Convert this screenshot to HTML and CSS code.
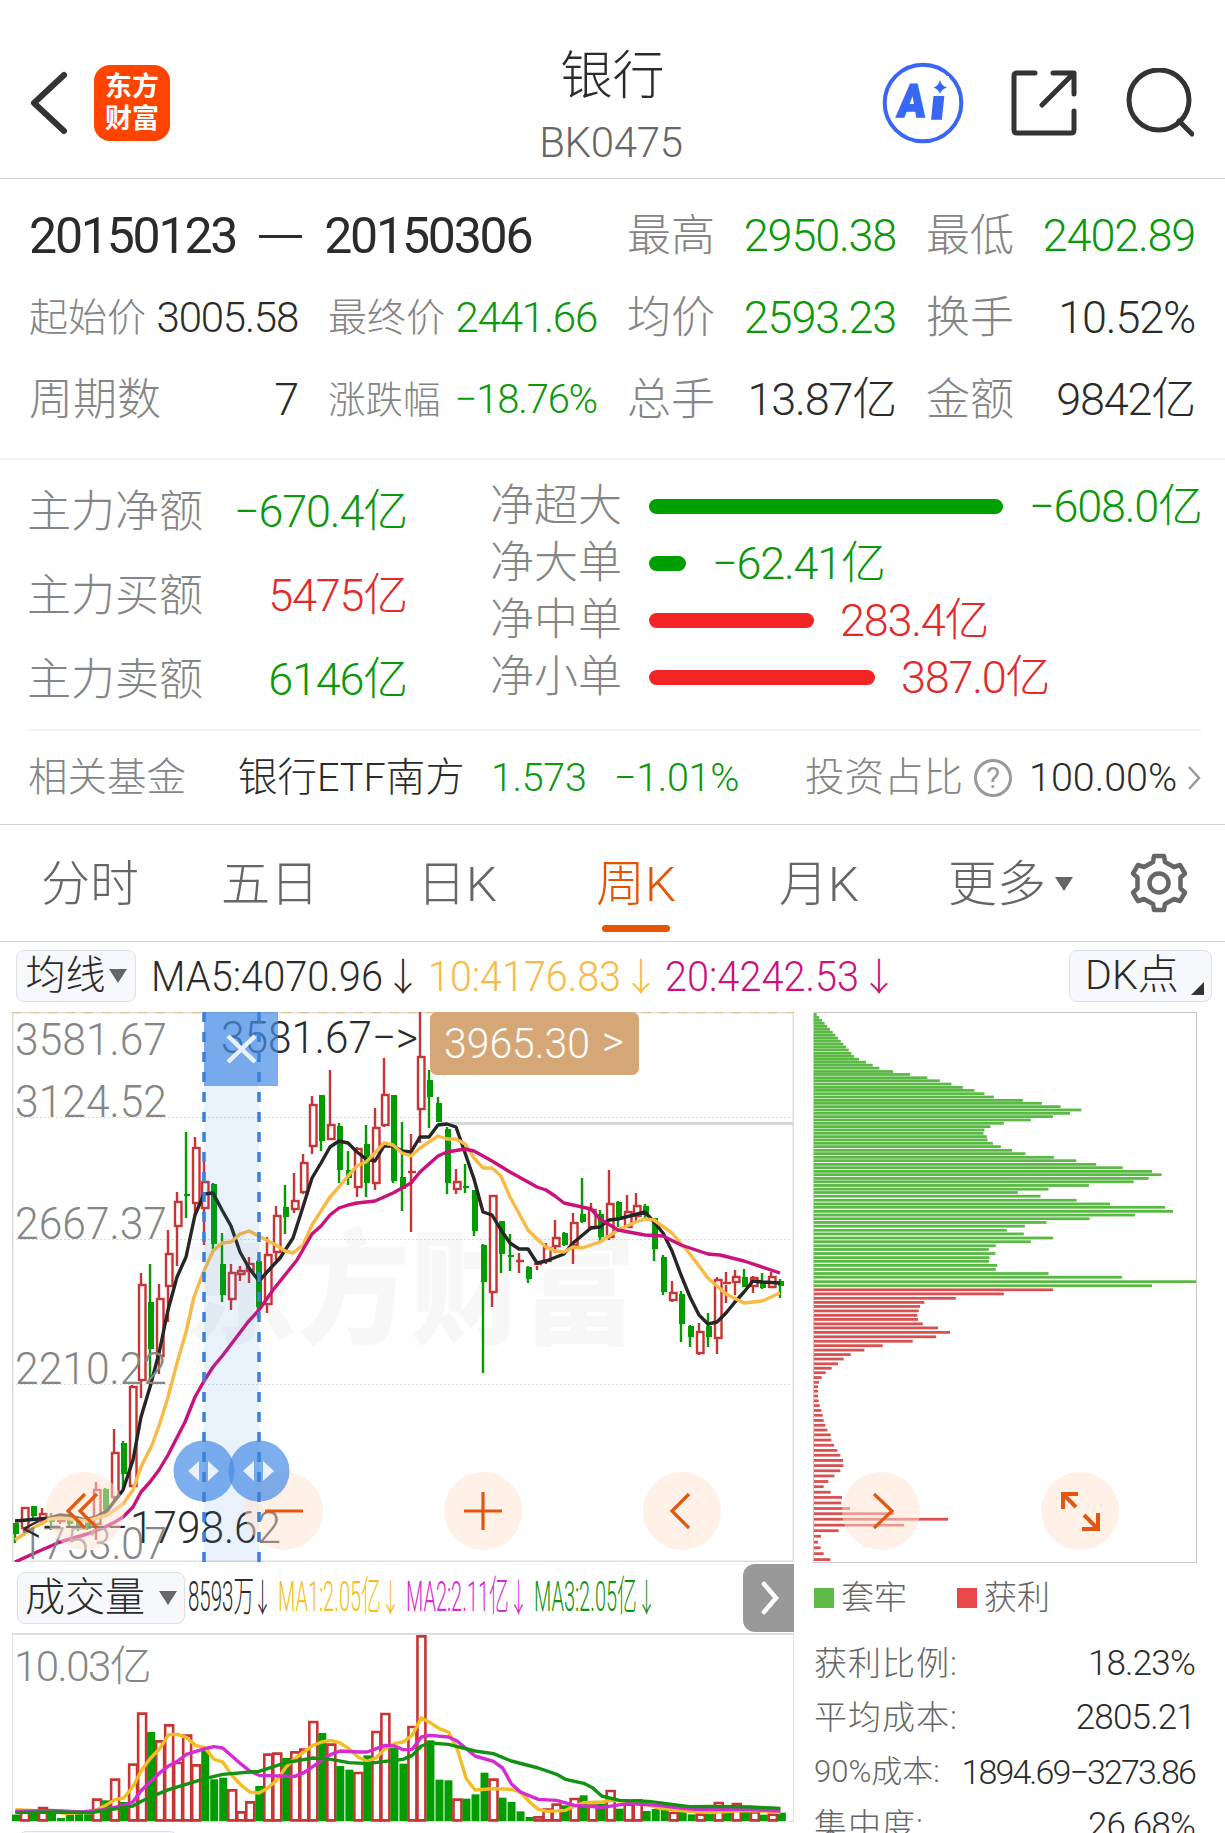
FILE: index.html
```html
<!DOCTYPE html>
<html lang="zh-CN">
<head>
    <meta charset="UTF-8">
    <meta name="viewport" content="width=device-width, initial-scale=1.0">
    <title>银行 BK0475</title>
    <link rel="stylesheet" href="styles.css">
</head>
<body>
    <header class="header">
        <svg class="back" width="40" height="66" viewBox="0 0 40 66"><path d="M35 5 L5 33 L35 61"/></svg>
        <div class="logo"><span>东方</span><span>财富</span></div>
        <div class="title">
            <h1>银行</h1>
            <p>BK0475</p>
        </div>
        <div class="actions">
            <svg width="82" height="82" viewBox="0 0 82 82">
                <circle class="ai-ring" cx="41" cy="41" r="38.3"/>
                <g transform="translate(5 0) skewX(-6)">
                    <text class="ai-text" x="15" y="55" textLength="28" lengthAdjust="spacingAndGlyphs">A</text>
                    <text class="ai-text" x="48" y="57" textLength="15" lengthAdjust="spacingAndGlyphs">i</text>
                </g>
                <rect x="47" y="14" width="20" height="20" fill="#fff"/>
                <path class="ai-star" d="M58 18 Q59.5 24 65 25.500 Q59.500 27 58 32 Q56.500 27 51.500 25.500 Q56.500 24 58 18Z"/>
            </svg>
            <svg class="line-icon" width="66" height="66" viewBox="0 0 66 66"><path d="M24 3 H6 Q3 3 3 6 V60 Q3 63 6 63 H60 Q63 63 63 60 V41 M42 3 H63 V24 M31 35 L62 4"/></svg>
            <svg class="line-icon" width="68" height="70" viewBox="0 0 68 70"><circle cx="33" cy="32" r="30"/><path d="M53 53 L66 66"/></svg>
        </div>
    </header>

    <section class="stats">
        <div class="range">20150123 <i></i> 20150306</div>
        <div class="stat"><label>最高</label><b class="down">2950.38</b></div>
        <div class="stat"><label>最低</label><b class="down">2402.89</b></div>

        <div class="stat mid"><label>起始价</label><b>3005.58</b></div>
        <div class="stat mid"><label>最终价</label><b class="down">2441.66</b></div>
        <div class="stat"><label>均价</label><b class="down">2593.23</b></div>
        <div class="stat"><label>换手</label><b>10.52%</b></div>

        <div class="stat"><label>周期数</label><b>7</b></div>
        <div class="stat small"><label>涨跌幅</label><b class="down">−18.76%</b></div>
        <div class="stat"><label>总手</label><b>13.87亿</b></div>
        <div class="stat"><label>金额</label><b>9842亿</b></div>
    </section>

    <section class="funds">
        <div class="fund-main">
            <div class="stat"><label>主力净额</label><b class="down">−670.4亿</b></div>
            <div class="stat"><label>主力买额</label><b class="up">5475亿</b></div>
            <div class="stat"><label>主力卖额</label><b class="down">6146亿</b></div>
        </div>
        <div class="fund-bars">
            <div class="fund-row down"><label>净超大</label><span class="bar" style="width:354px"></span><b>−608.0亿</b></div>
            <div class="fund-row down"><label>净大单</label><span class="bar" style="width:37px"></span><b>−62.41亿</b></div>
            <div class="fund-row up"><label>净中单</label><span class="bar" style="width:165px"></span><b>283.4亿</b></div>
            <div class="fund-row up"><label>净小单</label><span class="bar" style="width:226px"></span><b>387.0亿</b></div>
        </div>
    </section>

    <section class="related">
        <span class="grey">相关基金</span>
        <span class="etf">银行ETF南方</span>
        <span class="down">1.573</span>
        <span class="down">−1.01%</span>
        <span class="grey ratio">投资占比</span>
        <span class="help">?</span>
        <span class="pct">100.00%</span>
        <svg width="14" height="26" viewBox="0 0 14 26"><path d="M2 2 L12 13 L2 24"/></svg>
    </section>

    <nav class="tabs">
        <a>分时</a>
        <a>五日</a>
        <a>日K</a>
        <a class="active">周K</a>
        <a>月K</a>
        <a class="more">更多<i></i></a>
        <svg class="gear" width="62" height="62" viewBox="-31 -31 62 62">
            <path d="M-6-21 L-5-27 H5 L6-21 L15-16 L21-18 L26-9.500 L21.500-5.500 V5.500 L26 9.500 L21 18 L15 16 L6 21 L5 27 H-5 L-6 21 L-15 16 L-21 18 L-26 9.500 L-21.500 5.500 V-5.500 L-26-9.500 L-21-18 L-15-16Z"/>
            <circle r="9.500"/>
        </svg>
    </nav>

    <div class="ma-bar">
        <button class="chip">均线<i></i></button>
        <svg width="760" height="52" viewBox="145 950 760 52">
            <g class="ma-text">
                <text x="151" y="991" textLength="232" lengthAdjust="spacingAndGlyphs">MA5:4070.96</text>
                <text class="arrow" x="384" y="990">↓</text>
            </g>
            <g class="ma-text yellow">
                <text x="428" y="991" textLength="193" lengthAdjust="spacingAndGlyphs">10:4176.83</text>
                <text class="arrow" x="622" y="990">↓</text>
            </g>
            <g class="ma-text magenta">
                <text x="665" y="991" textLength="194" lengthAdjust="spacingAndGlyphs">20:4242.53</text>
                <text class="arrow" x="860" y="990">↓</text>
            </g>
        </svg>
        <button class="chip dk">DK点</button>
    </div>

    <main class="charts">
        <div class="left">
            <svg class="kline" width="782" height="550" viewBox="12 1012 782 550">
                <text class="watermark" x="184" y="1334" textLength="452" lengthAdjust="spacingAndGlyphs">东方财富</text>
                <path class="grid" d="M12 1117.500 H793 M12 1239.500 H793 M12 1384.500 H793"/>
                <path class="frame" d="M12.500 1012 V1561.500 H793.500 V1012"/>
                <path class="frame" d="M12 1012.500 H794"/>
                <path class="limit" d="M12 1012.500 H794"/>
                <path class="level" d="M438 1123.500 H793"/>
                <g id="candles"></g>
                <polyline class="ma black" points="15,1521 50,1518 60,1515 70,1516 85,1520 96,1517 107,1511 113,1503 123,1490 133,1460 141,1417 150,1387 159,1353 168,1310 177,1277 186,1257 195,1215 204,1194 213,1193 222,1210 231,1226 240,1252 249,1268 259,1281 268,1271 280,1258 293,1238 302,1210 312,1178 321,1163 330,1147 339,1141 348,1143 357,1152 366,1159 375,1161 384,1146 393,1146 402,1151 411,1152 420,1137 429,1137 438,1125 447,1124 456,1127 463,1147 474,1179 483,1212 492,1215 501,1230 510,1243 519,1249 528,1249 537,1263 546,1261 564,1254 573,1243 591,1228 600,1227 609,1220 618,1219 645,1212 654,1222 663,1233 672,1251 681,1275 690,1297 699,1315 708,1324 717,1322 726,1313 735,1302 744,1292 753,1281 762,1282 780,1283"/>
                <polyline class="ma yellow" points="15,1540 33,1528 50,1519 60,1518 70,1519 87,1521 107,1515 123,1504 133,1490 141,1467 152,1445 160,1423 168,1397 177,1363 186,1332 194,1297 203,1273 213,1251 222,1243 231,1242 240,1234 249,1231 259,1236 268,1241 276,1245 285,1251 293,1253 303,1245 312,1225 330,1197 339,1187 348,1176 357,1166 366,1162 375,1153 384,1143 393,1145 402,1153 411,1156 420,1148 438,1136 447,1139 456,1139 465,1144 474,1158 483,1168 492,1168 501,1176 510,1197 528,1230 537,1239 546,1247 555,1251 564,1252 573,1247 582,1248 600,1242 618,1230 636,1222 645,1219 654,1220 672,1233 690,1254 708,1278 726,1294 744,1303 762,1301 780,1293"/>
                <polyline class="ma magenta" points="15,1562 37,1552 60,1542 87,1534 103,1528 115,1522 123,1517 133,1507 141,1492 150,1482 159,1470 168,1455 185,1422 195,1397 204,1381 213,1367 223,1355 248,1322 259,1310 273,1290 297,1260 312,1234 321,1226 330,1215 339,1208 348,1205 357,1203 375,1201 384,1197 393,1193 411,1183 420,1172 438,1156 447,1152 465,1149 474,1151 483,1156 492,1161 510,1172 519,1177 537,1187 546,1190 555,1196 564,1203 591,1209 600,1219 618,1230 645,1235 663,1236 681,1245 708,1254 720,1255 744,1261 771,1270 780,1273"/>
                <g class="axis">
                    <text x="15" y="1055" textLength="152" lengthAdjust="spacingAndGlyphs">3581.67</text>
                    <text x="15" y="1117" textLength="152" lengthAdjust="spacingAndGlyphs">3124.52</text>
                    <text x="15" y="1239" textLength="152" lengthAdjust="spacingAndGlyphs">2667.37</text>
                    <text x="15" y="1384" textLength="152" lengthAdjust="spacingAndGlyphs">2210.22</text>
                    <text x="20" y="1559" textLength="147" lengthAdjust="spacingAndGlyphs">1753.07</text>
                </g>
                <g class="mark">
                    <text x="221" y="1053" textLength="197" lengthAdjust="spacingAndGlyphs">3581.67−&gt;</text>
                    <text x="22" y="1543" textLength="106" lengthAdjust="spacingAndGlyphs">&lt;−−−−</text>
                    <text x="130" y="1543" textLength="151" lengthAdjust="spacingAndGlyphs">1798.62</text>
                </g>
                <rect class="price-tag" x="430" y="1012" width="209" height="63" rx="7"/>
                <text class="price-text" x="444" y="1058" textLength="146" lengthAdjust="spacingAndGlyphs">3965.30</text>
                <text class="price-text" x="602" y="1056" textLength="22" lengthAdjust="spacingAndGlyphs">&gt;</text>
            </svg>

            <div class="vol-bar">
                <button class="chip">成交量<i></i></button>
                <svg width="480" height="52" viewBox="186 1572 480 52">
                    <g class="vol-text">
                        <text x="189" y="1611" textLength="66" lengthAdjust="spacingAndGlyphs">8593万</text>
                        <text class="v1" x="279" y="1611" textLength="103" lengthAdjust="spacingAndGlyphs">MA1:2.05亿</text>
                        <text class="v2" x="407" y="1611" textLength="103" lengthAdjust="spacingAndGlyphs">MA2:2.11亿</text>
                        <text class="v3" x="535" y="1611" textLength="103" lengthAdjust="spacingAndGlyphs">MA3:2.05亿</text>
                        <text class="arrow" x="254" y="1611" textLength="19" lengthAdjust="spacingAndGlyphs">↓</text>
                        <text class="arrow v1" x="382" y="1611" textLength="19" lengthAdjust="spacingAndGlyphs">↓</text>
                        <text class="arrow v2" x="510" y="1611" textLength="19" lengthAdjust="spacingAndGlyphs">↓</text>
                        <text class="arrow v3" x="638" y="1611" textLength="19" lengthAdjust="spacingAndGlyphs">↓</text>
                    </g>
                </svg>
                <button class="next"><svg width="20" height="34" viewBox="0 0 20 34"><path d="M3 3 L15 17 L3 31"/></svg></button>
            </div>

            <div class="volume">
                <span>10.03亿</span>
                <svg width="782" height="187" viewBox="23.500 219 1531 561" preserveAspectRatio="none">
                    <g id="volumes"></g>
                    <polyline class="ma v1" points="30,743 100,748 130,755 180,750 207,730 225,713 242,708 260,675 277,625 295,588 313,560 330,518 348,517 365,527 383,550 401,557 419,592 436,600 454,640 471,668 489,690 507,693 524,678 542,655 560,615 577,590 595,570 613,550 630,540 648,535 666,543 683,560 701,585 719,598 736,588 754,560 772,545 789,540 807,520 825,467 842,482 860,500 878,510 895,560 913,650 930,684 966,680 1001,682 1019,690 1037,720 1054,742 1072,748 1107,745 1125,732 1143,722 1178,720 1195,715 1248,720 1290,738 1340,747 1390,752 1440,747 1480,746 1528,752"/>
                    <polyline class="ma v2" points="30,748 100,745 160,750 207,742 242,730 260,720 277,685 313,632 330,612 348,597 365,577 401,560 419,554 436,558 454,582 471,605 489,627 507,640 577,643 595,632 613,613 630,595 648,577 666,567 701,570 719,570 754,550 772,552 789,563 807,562 825,525 842,520 878,525 895,537 930,582 966,598 984,618 1001,665 1019,690 1054,712 1090,715 1125,730 1178,736 1230,725 1290,730 1340,740 1370,743 1460,742 1528,747"/>
                    <polyline class="ma v3" points="30,752 100,750 180,752 207,745 260,732 277,718 295,705 330,683 401,650 436,637 507,628 560,602 613,588 648,592 683,602 719,605 754,598 789,592 807,580 825,552 842,543 878,547 930,567 966,575 1001,597 1054,618 1090,637 1107,652 1143,664 1160,677 1178,702 1213,715 1270,718 1350,734 1400,733 1470,735 1528,739"/>
                </svg>
            </div>
            <div class="chip peek"></div>
        </div>

        <aside class="right">
            <svg class="chips" width="384" height="551" viewBox="69 33 1151 1489" preserveAspectRatio="none">
                <g id="chips"></g>
            </svg>
            <div class="legend">
                <span class="sq trapped"></span><span>套牢</span>
                <span class="sq profit"></span><span>获利</span>
            </div>
            <dl class="cost">
                <div><dt>获利比例:</dt><dd>18.23%</dd></div>
                <div><dt>平均成本:</dt><dd>2805.21</dd></div>
                <div class="tight"><dt>90%成本:</dt><dd>1894.69−3273.86</dd></div>
                <div><dt>集中度:</dt><dd>26.68%</dd></div>
            </dl>
        </aside>

        <!-- selected range and floating controls -->
        <svg class="overlay" width="1225" height="550" viewBox="0 1012 1225 550">
            <rect class="sel" x="204" y="1012" width="55" height="550"/>
            <g class="pads">
                <circle cx="85" cy="1511" r="39"/>
                <circle cx="284" cy="1511" r="39"/>
                <circle cx="483" cy="1511" r="39"/>
                <circle cx="682" cy="1511" r="39"/>
                <circle cx="881" cy="1511" r="39"/>
                <circle cx="1080" cy="1511" r="39"/>
            </g>
            <path class="pad-icon" d="M85 1494 L68 1511 L85 1528 M97 1494 L80 1511 L97 1528 M265 1511 H303 M464 1511 H502 M483 1492 V1530 M689 1494 L672 1511 L689 1528 M874 1494 L892 1511 L874 1528"/>
            <path class="pad-icon bold" d="M1078 1494 H1063 V1509 M1063 1494 L1076 1507 M1082 1529 H1098 V1513 M1098 1529 L1084 1515"/>
            <rect class="handle" x="204" y="1012" width="74" height="74"/>
            <circle class="handle" cx="204" cy="1471" r="30.500"/>
            <circle class="handle" cx="259" cy="1471" r="30.500"/>
            <path class="cross" d="M228 1036 L255 1062 M255 1036 L228 1062"/>
            <path class="tri" d="M199 1461 V1481 L188 1471Z M208 1461 V1481 L219 1471Z M254 1461 V1481 L243 1471Z M263 1461 V1481 L274 1471Z"/>
            <path class="sel-line" d="M204 1012 V1562 M259 1012 V1562"/>
        </svg>
    </main>

    <script>
        var NS = "http://www.w3.org/2000/svg";

        function add(parent, tag, attrs) {
            var el = document.createElementNS(NS, tag);
            for (var k in attrs) el.setAttribute(k, attrs[k]);
            parent.appendChild(el);
        }

        // [high, body top, body bottom, low, 1 = up]
        var candles = [
            [1523,1523,1534,1543,0],[1507,1507,1529,1536,1],[1506,1506,1516,1518,0],[1508,1513,1522,1525,1],[1513,1516,1522,1530,0],
            [1515,1517,1522,1524,1],[1514,1517,1524,1528,0],[1516,1519,1527,1531,0],[1516,1521,1529,1530,0],[1482,1489,1525,1540,1],
            [1488,1489,1510,1512,0],[1429,1452,1498,1500,1],[1441,1443,1474,1488,0],[1385,1386,1487,1487,1],[1273,1284,1381,1398,1],
            [1264,1302,1349,1383,0],[1284,1298,1357,1374,1],[1230,1253,1287,1322,1],[1192,1201,1227,1266,1],[1132,1194,1196,1218,0],
            [1137,1147,1204,1216,1],[1162,1181,1209,1245,1],[1183,1184,1244,1249,0],[1233,1264,1295,1302,0],[1264,1272,1300,1310,1],
            [1266,1270,1275,1281,1],[1257,1263,1272,1283,1],[1260,1261,1307,1318,0],[1237,1254,1305,1313,1],[1206,1215,1253,1260,1],
            [1185,1207,1217,1234,0],[1173,1200,1210,1213,1],[1154,1162,1193,1194,1],[1096,1104,1147,1154,1],[1095,1095,1141,1151,0],
            [1070,1124,1140,1140,1],[1123,1126,1170,1183,0],[1151,1170,1178,1185,0],[1147,1148,1188,1197,1],[1125,1144,1183,1197,0],
            [1108,1127,1184,1190,1],[1058,1094,1126,1127,1],[1095,1095,1181,1183,0],[1122,1177,1189,1211,0],[1134,1171,1172,1232,1],
            [1012,1056,1110,1143,1],[1070,1080,1097,1128,0],[1097,1103,1122,1122,0],[1127,1129,1183,1194,0],[1169,1181,1190,1194,1],
            [1164,1186,1187,1193,0],[1190,1190,1231,1236,0],[1244,1245,1282,1373,0],[1195,1195,1293,1307,1],[1221,1221,1254,1273,0],
            [1234,1255,1256,1271,0],[1253,1260,1261,1273,1],[1266,1267,1279,1283,0],[1262,1263,1266,1270,1],[1243,1247,1262,1264,1],
            [1220,1237,1247,1253,1],[1232,1233,1245,1246,0],[1213,1222,1246,1264,1],[1178,1214,1222,1223,0],[1203,1209,1228,1228,1],
            [1210,1214,1237,1243,0],[1170,1203,1238,1240,1],[1201,1202,1220,1227,0],[1195,1211,1228,1228,1],[1193,1205,1217,1222,1],
            [1204,1206,1215,1220,0],[1218,1218,1249,1261,0],[1255,1257,1292,1295,0],[1281,1292,1301,1302,1],[1291,1294,1324,1342,0],
            [1325,1326,1337,1347,0],[1323,1331,1354,1355,1],[1313,1326,1337,1347,0],[1277,1279,1339,1354,1],[1272,1282,1285,1303,1],
            [1270,1276,1283,1295,1],[1269,1277,1287,1287,0],[1276,1277,1287,1293,1],[1273,1281,1288,1289,0],[1272,1276,1288,1288,1],
            [1279,1281,1286,1298,0]
        ];

        var kg = document.getElementById("candles");
        candles.forEach(function (c, i) {
            var x = 15 + 9 * i;
            if (!c[4]) {
                add(kg, "path", { "class": "k-down", d: "M" + x + " " + c[0] + "V" + c[3] });
                add(kg, "rect", { "class": "k-down-body", x: x - 2, y: c[1], width: 6, height: Math.max(2, c[2] - c[1]) });
            } else {
                add(kg, "path", { "class": "k-up", d: "M" + x + " " + c[0] + "V" + c[1] + "M" + x + " " + c[2] + "V" + c[3] });
                if (c[2] - c[1] < 4) {
                    add(kg, "path", { "class": "k-up", d: "M" + (x - 3) + " " + (c[1] + 1) + "H" + (x + 5) });
                } else {
                    add(kg, "rect", { "class": "k-up", x: x - 2, y: c[1] + 1, width: 6.5, height: c[2] - c[1] - 2 });
                }
            }
        });

        var volumes = [
            758,745,750,735,755,768,758,745,757,710,715,650,720,605,452,510,535,487,600,518,607,560,652,647,682,748,718,672,575,572,
            588,568,560,477,513,545,612,623,630,580,507,453,558,605,492,220,535,653,655,710,710,697,632,650,707,720,748,765,763,740,
            725,730,708,700,728,725,684,740,725,712,747,741,742,750,748,757,755,745,720,748,723,748,748,758,755,752
        ];
        var volUp = [1,3,9,11,13,14,16,17,18,19,20,24,25,26,28,29,31,32,33,35,38,40,41,44,45,49,53,58,59,60,62,64,66,68,69,73,76,78,80,82,84];

        var vg = document.getElementById("volumes");
        volumes.forEach(function (y, i) {
            var x = 31.5 + 17.64 * i;
            if (volUp.indexOf(i) < 0) {
                add(vg, "rect", { "class": "v-down", x: x - 8, y: y, width: 15.6, height: 777 - y });
            } else {
                add(vg, "rect", { "class": "v-up", x: x - 8, y: y + 3, width: 15.6, height: Math.max(3, 772 - y) });
            }
        });

        // cost distribution rows: [y, right edge]
        var rows = [
            [40,80],[48,88],[56,96],[64,104],[72,112],[80,120],[88,128],[96,136],[104,144],[112,152],[120,160],[128,168],[136,176],[145,184],[153,192],
            [161,207],[169,228],[177,248],[185,268],[194,309],[202,360],[211,412],[219,449],[228,484],[237,518],[245,553],[254,583],[263,611],[272,698],[280,755],
            [289,811],[298,873],[307,839],[316,788],[325,722],[334,641],[343,601],[352,583],[361,580],[370,590],[379,592],[388,608],[397,632],[407,666],[416,706],
            [426,791],[435,858],[445,918],[454,997],[464,1085],[473,1114],[483,1075],[492,1030],[502,896],[512,775],[521,683],[531,751],[542,859],[552,959],[561,1124],
            [572,1148],[582,1034],[592,898],[602,769],[612,704],[623,650],[633,701],[644,789],[654,722],[665,617],[675,596],[686,616],[697,598],[707,597],[718,621],
            [729,617],[740,775],[750,995],[762,1218],[773,1085],
            [784,789],[795,641],[807,497],[818,403],[829,390],[841,386],[853,382],[864,384],[876,398],[887,444],[899,480],[911,438],[923,368],[935,278],[947,223],
            [959,182],[971,161],[984,144],[996,125],[1008,107],[1021,95],[1034,87],[1046,84],[1058,84],[1071,84],[1084,86],[1097,89],[1110,94],[1123,98],[1137,101],
            [1150,106],[1163,112],[1176,122],[1190,124],[1204,132],[1218,142],[1231,151],[1245,159],[1259,160],[1273,151],[1287,133],[1302,115],[1316,101],[1331,122],[1345,156],
            [1360,154],[1375,180],[1389,311],[1404,474],[1420,342],[1435,146],[1450,93],[1466,84],[1481,92],[1497,101],[1513,121]
        ];

        var cg = document.getElementById("chips");
        rows.forEach(function (r) {
            add(cg, "rect", { "class": r[0] < 780 ? "trapped" : "profit", x: 72, y: r[0] - 4, width: r[1] - 72, height: 7.5 });
        });
    </script>
</body>
</html>
```
FILE: styles.css
```css
* {
    box-sizing: border-box;
}

body {
    margin: 0;
    width: 1225px;
    height: 1833px;
    overflow: hidden;
    background: #fff;
    color: #2b2b2b;
    font-family: Roboto, "Noto Sans CJK SC", sans-serif;
    font-weight: 300;
    line-height: 1.2;
}

h1, p, dl, dd, dt {
    margin: 0;
    font-weight: 300;
}

b {
    font-weight: 300;
}

i {
    display: inline-block;
}

svg {
    display: block;
    fill: none;
}

.down {
    color: #0b980b;
}

.up {
    color: #e32a2a;
}

.grey, label {
    color: #858585;
}

/* Header */
.header {
    display: flex;
    align-items: center;
    height: 179px;
    padding: 27px 31px 0 29px;
    border-bottom: 1px solid #d3d3d3;
    position: relative;
}

.back {
    stroke: #333;
    stroke-width: 6;
    stroke-linecap: round;
    stroke-linejoin: round;
}

.logo {
    display: flex;
    flex-direction: column;
    align-items: center;
    justify-content: center;
    width: 76px;
    height: 76px;
    margin-left: 25px;
    border-radius: 16px;
    background: #ff4400;
    color: #fff;
    font-size: 27px;
    font-weight: 700;
    line-height: 32px;
}

.title {
    position: absolute;
    left: 0;
    right: 0;
    top: 40px;
    text-align: center;
}

.title h1 {
    font-size: 52px;
    line-height: 74px;
}

.title p {
    padding-right: 3px;
    color: #666;
    font-size: 42px;
    line-height: 57px;
    letter-spacing: -0.300px;
}

.actions {
    display: flex;
    align-items: center;
    margin-left: auto;
}

.actions svg + svg {
    margin-left: 47px;
}

.actions svg:last-child {
    margin-left: 49px;
}

.ai-ring {
    stroke: #3866f5;
    stroke-width: 4;
}

.ai-text {
    fill: #3866f5;
    stroke: #3866f5;
    stroke-width: 1.500;
    font-size: 46px;
    font-weight: 900;
}

.ai-star {
    fill: #3866f5;
}

.line-icon {
    stroke: #333;
    stroke-width: 5;
    stroke-linecap: round;
    stroke-linejoin: round;
}

/* Period stats */
.stats {
    display: grid;
    grid-template-columns: repeat(4, 268px);
    grid-template-rows: repeat(3, 82px);
    column-gap: 31px;
    height: 281px;
    padding: 16px 30px 0 29px;
    border-bottom: 2px solid #f2f2f2;
}

.range {
    grid-column: span 2;
    display: flex;
    align-items: center;
    font-size: 50px;
    font-weight: 400;
    letter-spacing: -2.200px;
}

.range i {
    width: 43px;
    height: 3px;
    margin: 0 22px 0 23px;
    background: #2b2b2b;
}

.stat {
    display: flex;
    align-items: center;
    justify-content: space-between;
    font-size: 44px;
    white-space: nowrap;
}

.stat b, .fund-row b {
    font-size: 45px;
    letter-spacing: -1.200px;
}

.stats .stat b {
    margin-right: -1px;
}

.stat.mid label {
    font-size: 39px;
}

.stat.mid b {
    font-size: 42px;
}

.stat.small label {
    font-size: 37.500px;
}

.stat.small b {
    font-size: 40px;
}

/* Money flow */
.funds {
    display: flex;
    height: 269px;
    padding: 10px 0 0 27px;
}

.fund-main {
    display: grid;
    grid-template-rows: repeat(3, 84px);
    width: 380px;
}

.fund-bars {
    margin: 8px 0 0 83px;
}

.fund-row {
    display: flex;
    align-items: center;
    height: 57px;
    font-size: 44px;
    white-space: nowrap;
}

.fund-row label {
    width: 159px;
}

.bar {
    height: 15px;
    margin-right: 26px;
    border-radius: 8px;
    background: #009f00;
}

.fund-row.up .bar {
    background: #f32424;
}

/* Related fund */
.related {
    display: grid;
    grid-template-columns: 210px 253px 123px 191px 169px 55px 158px 14px;
    align-items: center;
    height: 95px;
    margin: 0 24px 0 28px;
    border-top: 2px solid #f4f4f4;
    font-size: 39.500px;
    white-space: nowrap;
}

.related .down {
    letter-spacing: -0.300px;
}

.help {
    width: 38px;
    height: 38px;
    border: 3px solid #999;
    border-radius: 50%;
    color: #999;
    font-size: 29px;
    font-weight: 400;
    line-height: 32px;
    text-align: center;
}

.related svg {
    stroke: #999;
    stroke-width: 2.500;
}

/* Tabs */
.tabs {
    display: grid;
    grid-template-columns: 180px 180px 194px 164px 202px 188px 1fr;
    align-items: center;
    height: 118px;
    border-top: 1px solid #d3d3d3;
    border-bottom: 1px solid #d3d3d3;
    color: #666;
    font-size: 49px;
    text-align: center;
}

.tabs a {
    position: relative;
    padding-top: 4px;
    line-height: 112px;
}

.tabs .active {
    color: #e65400;
}

.tabs .active::after {
    content: "";
    position: absolute;
    left: 50%;
    bottom: 9px;
    width: 68px;
    height: 7px;
    margin-left: -34px;
    border-radius: 4px;
    background: #e65400;
}

.tabs i, .chip i {
    border: 9px solid transparent;
    border-top: 14px solid #666;
    border-bottom: 0;
    vertical-align: middle;
}

.tabs .more {
    padding-right: 7px;
}

.tabs i {
    margin: 0 0 8px 9px;
}

.gear {
    margin-left: 20px;
    stroke: #666;
    stroke-width: 4.500;
    stroke-linejoin: round;
}

/* Indicator bars */
.ma-bar {
    display: flex;
    align-items: center;
    height: 70px;
    padding: 0 13px 2px 16px;
}

.chip {
    display: flex;
    align-items: center;
    justify-content: center;
    height: 52px;
    width: 120px;
    padding: 0;
    border: 1.500px solid #dcdfe4;
    border-radius: 8px;
    background: #f7f8fb;
    color: #2b2b2b;
    font: inherit;
    font-size: 40px;
    white-space: nowrap;
}

.chip i {
    margin-left: 3px;
}

.ma-bar svg {
    margin-left: 9px;
}

.chip.dk {
    position: relative;
    width: 143px;
    margin-left: auto;
    padding-right: 17px;
    font-size: 41px;
}

.chip.dk::after {
    content: "";
    position: absolute;
    right: 7px;
    bottom: 6px;
    border-left: 13px solid transparent;
    border-bottom: 13px solid #333;
}

.ma-text {
    fill: #2b2b2b;
    font-size: 42px;
}

.arrow {
    font-family: "Noto Sans CJK SC", sans-serif;
    font-size: 38px;
}

.ma-text.yellow {
    fill: #f8ba45;
}

.ma-text.magenta {
    fill: #cb117b;
}

/* Charts */
.charts {
    display: flex;
    position: relative;
    padding-left: 12px;
}

.left {
    width: 782px;
}

.right {
    width: 384px;
    margin-left: 19px;
}

.watermark {
    fill: #f7f7f7;
    font-size: 124px;
    font-weight: 900;
}

.grid {
    stroke: #d9d9d9;
    stroke-dasharray: 2 2;
}

.frame {
    stroke: #dedede;
    stroke-width: 2;
}

.limit {
    stroke: #dcc09a;
    stroke-dasharray: 9 9;
}

.level {
    stroke: #d5d6dc;
    stroke-width: 3;
}

.k-down, .k-up {
    stroke-width: 2.400;
}

.k-down {
    stroke: #009c00;
}

.k-down-body, .v-down {
    fill: #009c00;
}

.k-up, .v-up {
    stroke: #c93434;
    fill: #fff;
}

.v-up {
    stroke-width: 2.600;
    vector-effect: non-scaling-stroke;
}

.ma {
    stroke-width: 3.400;
    stroke-linejoin: round;
    vector-effect: non-scaling-stroke;
}

.ma.black { stroke: #262626; }
.ma.yellow { stroke: #f8ba45; }
.ma.magenta { stroke: #cb117b; }
.ma.v1 { stroke: #f2be22; }
.ma.v2 { stroke: #d52bd5; }
.ma.v3 { stroke: #119311; }

.axis, .mark {
    fill: #868686;
    font-size: 45px;
}

.mark {
    fill: #2b2b2b;
}

.price-tag {
    fill: #d6a776;
}

.price-text {
    fill: #fff;
    font-size: 42px;
}

.vol-bar {
    display: flex;
    align-items: center;
    height: 71px;
    padding-left: 5px;
}

.vol-bar .chip {
    width: 168px;
}

.vol-bar .chip i {
    margin-left: 14px;
}

.vol-text {
    fill: #2b2b2b;
    font-size: 42px;
}

.vol-text .v1 { fill: #f2be22; }
.vol-text .v2 { fill: #d52bd5; }
.vol-text .v3 { fill: #119311; }

.next {
    display: flex;
    align-items: center;
    justify-content: center;
    width: 51px;
    height: 68px;
    margin-left: auto;
    padding: 0;
    border: 0;
    border-radius: 12px 0 0 12px;
    background: #999;
}

.next svg {
    margin-left: 4px;
    stroke: #fff;
    stroke-width: 4.500;
    stroke-linecap: round;
}

.volume {
    position: relative;
    height: 189px;
    border: 1.500px solid #dedede;
    border-top-width: 2px;
}

.volume svg {
    margin-left: -1px;
}

.volume span {
    position: absolute;
    left: 1px;
    top: 7px;
    color: #868686;
    font-size: 42px;
    letter-spacing: -1.500px;
}

.peek {
    margin: 9px 0 0 6px;
    width: 160px;
}

/* Cost distribution */
.chips {
    outline: 1.500px solid #c9c9c9;
    outline-offset: -1px;
}

rect.trapped { fill: #5ab945; }
rect.profit { fill: #d95050; }
.sq.trapped { background: #5cba45; }
.sq.profit { background: #e84848; }

.legend {
    display: flex;
    align-items: center;
    height: 70px;
    color: #666;
    font-size: 33px;
}

.sq {
    width: 20px;
    height: 20px;
    margin: 0 7px 0 1px;
}

.sq.profit {
    margin-left: 50px;
}

.cost div {
    display: flex;
    align-items: center;
    justify-content: space-between;
    height: 54px;
    padding: 0 2px 0 1px;
    font-size: 33px;
    white-space: nowrap;
}

.cost {
    margin-top: 4px;
}

.cost dt {
    color: #666;
    letter-spacing: 1px;
}

.cost dd {
    font-size: 35px;
    letter-spacing: -0.800px;
}

.cost .tight {
    font-size: 31px;
}

.cost .tight dt {
    letter-spacing: 0;
}

.cost .tight dd {
    font-size: 34px;
    letter-spacing: -1.900px;
}

/* Floating layer over both charts */
.overlay {
    position: absolute;
    left: 0;
    top: 0;
}

.sel {
    fill: rgba(55, 130, 220, 0.11);
}

.sel-line {
    stroke: #3b80d9;
    stroke-width: 3.500;
    stroke-dasharray: 10 10;
}

.handle {
    fill: rgba(70, 140, 230, 0.7);
}

.cross {
    stroke: #e9f1fc;
    stroke-width: 4.500;
}

.tri {
    fill: #e9f1fc;
}

.pads {
    fill: rgba(255, 225, 210, 0.5);
}

.pad-icon {
    stroke: #e2570f;
    stroke-width: 3.200;
}

.pad-icon.bold {
    stroke-width: 4;
}
```
